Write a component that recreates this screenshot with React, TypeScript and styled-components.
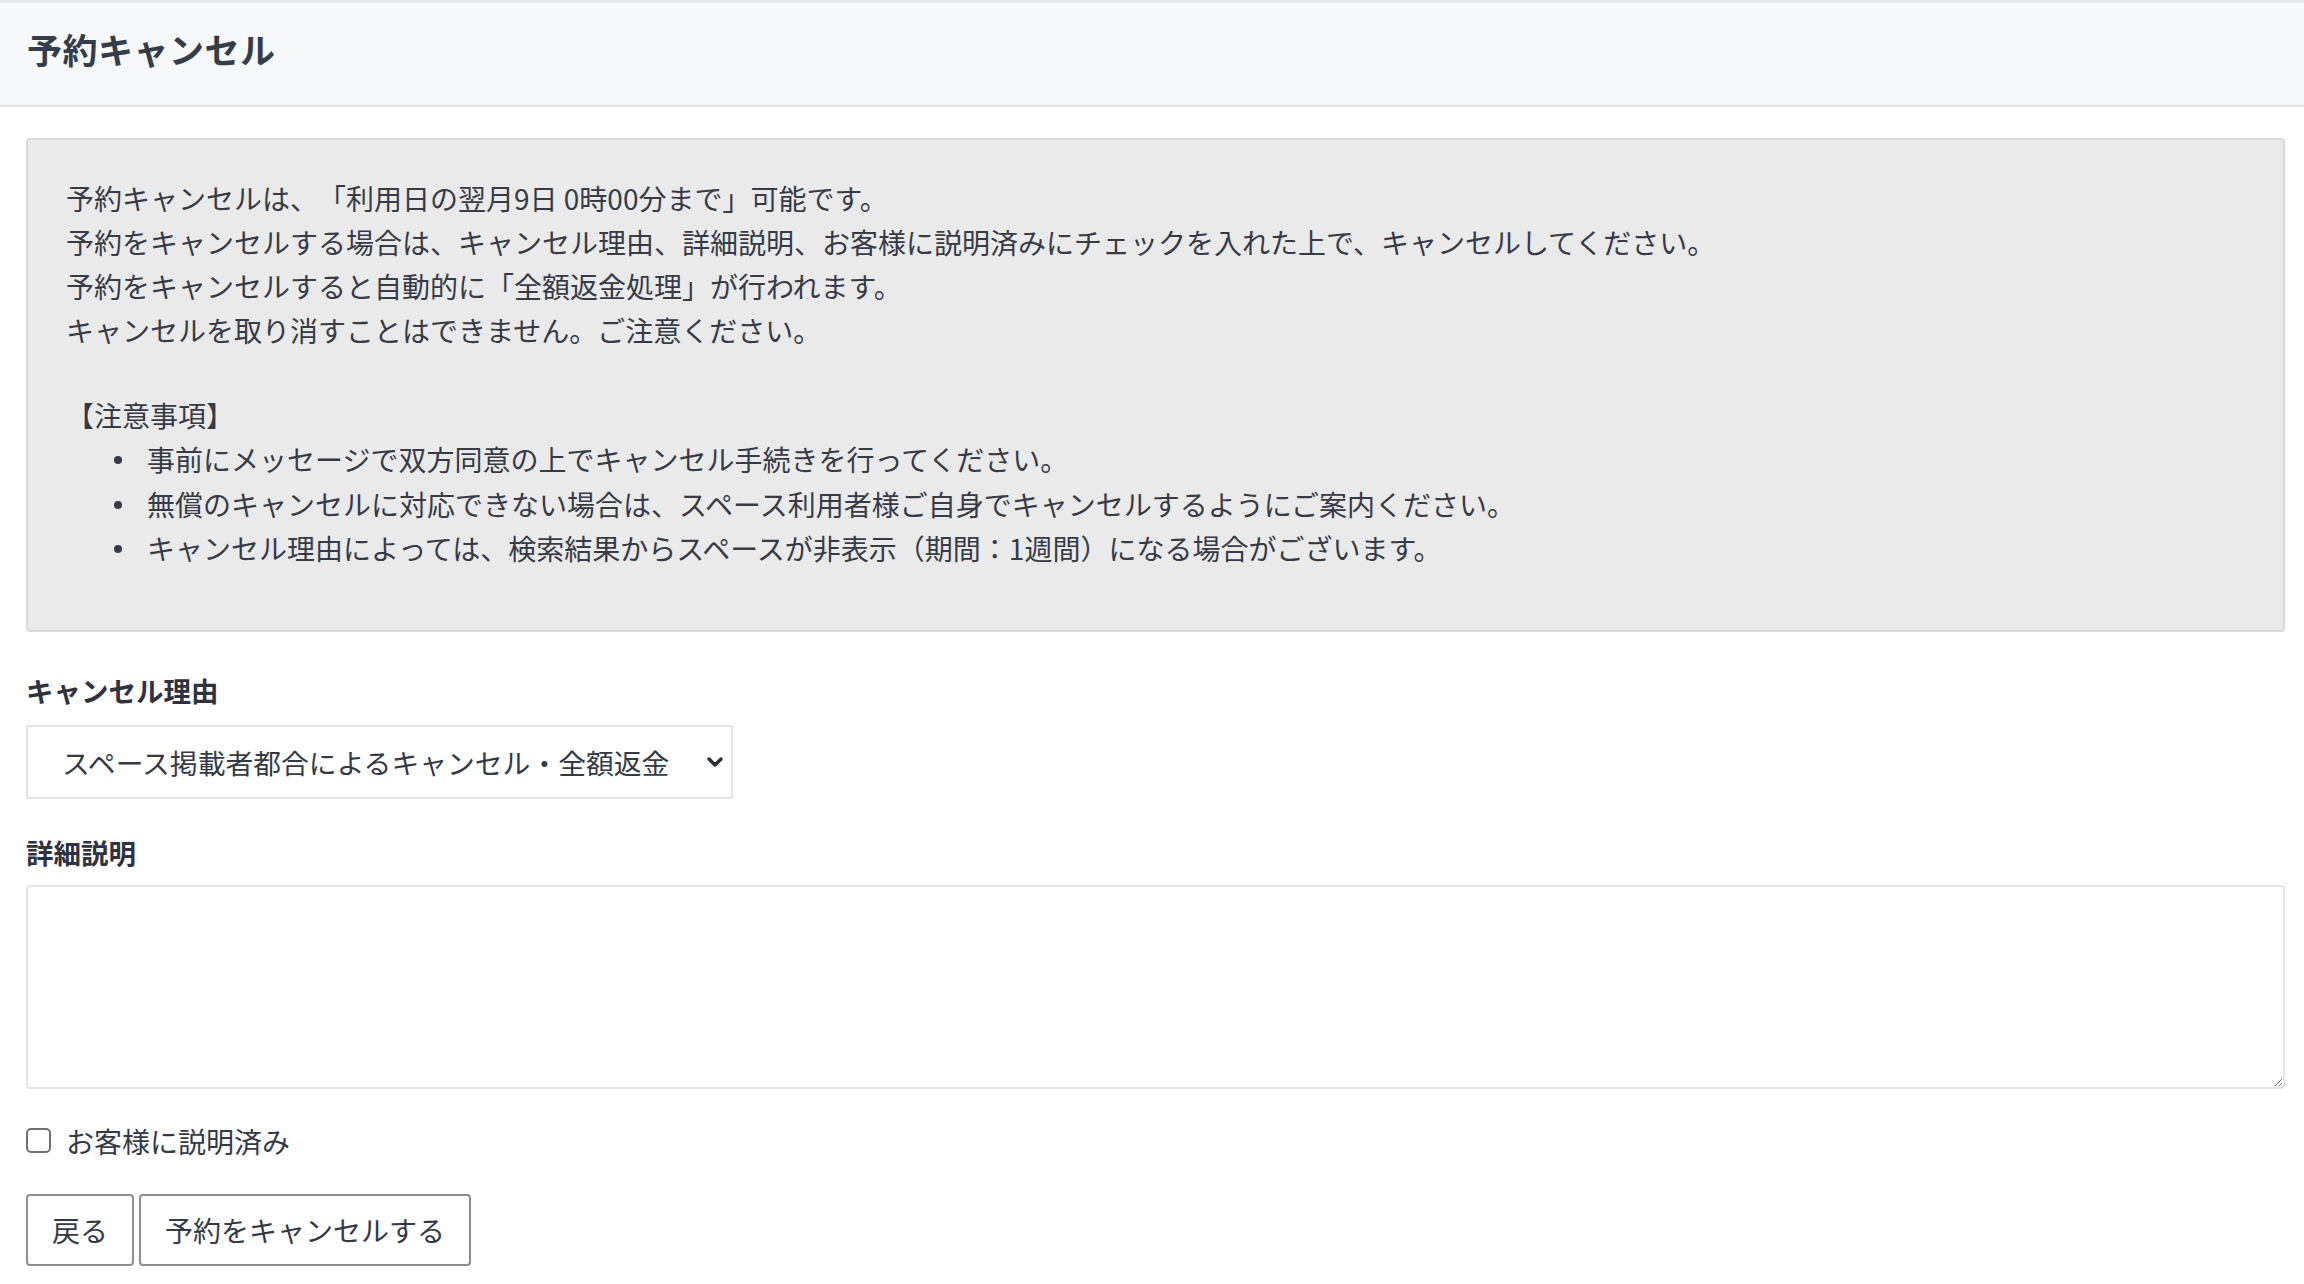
import React from "react";
import styled, { createGlobalStyle } from "styled-components";

const Global = createGlobalStyle`
  html, body { margin: 0; padding: 0; background: #ffffff; }
  body {
    font-family: "Noto Sans CJK JP", "Noto Sans", sans-serif;
    color: #333a45;
    font-size: 28px;
    text-spacing-trim: space-all;
  }
  * { box-sizing: border-box; }
`;

const Page = styled.div`
  display: flex;
  flex-direction: column;
  min-height: 1284px;
`;

const Header = styled.header`
  height: 107px;
  background: #f7f8fa;
  border-top: 3px solid #e6e7e9;
  border-bottom: 2px solid #e3e3e3;
  display: flex;
  align-items: center;
  padding: 0 27px 11px;
`;

const Title = styled.h1`
  margin: 0;
  font-size: 35px;
  font-weight: 700;
  color: #343e4a;
  letter-spacing: 0.5px;
`;

const Main = styled.main`
  padding: 31px 19px 0 26px;
  display: flex;
  flex-direction: column;
`;

const InfoBox = styled.section`
  background: #eaeaea;
  border: 2px solid #d9d9d9;
  border-radius: 4px;
  padding: 36px 38px 59px 38px;
  line-height: 44px;
  font-size: 28px;
  color: #363b47;
`;

const Para = styled.p`
  margin: 0;
`;

const Spacer = styled.div`
  height: 41px;
`;

const Notes = styled.ul`
  margin: 0;
  padding-left: 81px;
  list-style: none;
  line-height: 44.5px;
`;

const Note = styled.li`
  position: relative;
  &::before {
    content: "";
    position: absolute;
    left: -33px;
    top: 19px;
    width: 8px;
    height: 8px;
    border-radius: 50%;
    background: #363b47;
  }
`;

const Label = styled.label<{ $top: number }>`
  display: block;
  font-weight: 700;
  font-size: 27.5px;
  line-height: 44px;
  color: #2f3341;
  margin-top: ${(p) => p.$top}px;
`;

const SelectWrap = styled.div`
  position: relative;
  width: 707px;
  margin-top: 13px;
`;

const Select = styled.select`
  appearance: none;
  -webkit-appearance: none;
  width: 100%;
  height: 74px;
  border: 2px solid #e4e4e4;
  border-radius: 2px;
  background: #ffffff;
  padding: 0 60px 0 34px;
  font-family: "Noto Sans CJK JP", "Noto Sans", sans-serif;
  font-size: 27.8px;
  color: #333a45;
  outline: none;
`;

const Chevron = styled.svg`
  position: absolute;
  right: 10px;
  top: 50%;
  transform: translateY(-50%);
  width: 16px;
  height: 12px;
  pointer-events: none;
`;

const TextArea = styled.textarea`
  display: block;
  width: 100%;
  height: 204px;
  margin-top: 11px;
  border: 2px solid #e4e4e4;
  border-radius: 4px;
  background: #ffffff;
  font-family: "Noto Sans CJK JP", "Noto Sans", sans-serif;
  font-size: 28px;
  outline: none;
  resize: vertical;
`;

const CheckRow = styled.label`
  display: flex;
  align-items: center;
  gap: 15px;
  margin-top: 30px;
  line-height: 44px;
  font-size: 28px;
  color: #333a45;
`;

const Check = styled.input`
  appearance: none;
  -webkit-appearance: none;
  width: 25px;
  height: 25px;
  margin: 0;
  border: 2px solid #707070;
  border-radius: 5px;
  background: #ffffff;
`;

const Actions = styled.div`
  display: flex;
  gap: 5px;
  margin-top: 31px;
`;

const Button = styled.button`
  height: 72px;
  padding: 0 24px;
  border: 2px solid #8e8e8e;
  border-radius: 4px;
  background: #ffffff;
  font-family: "Noto Sans CJK JP", "Noto Sans", sans-serif;
  font-size: 28px;
  color: #333a45;
  cursor: pointer;
`;

export default function App() {
  return (
    <Page>
      <Global />
      <Header>
        <Title>予約キャンセル</Title>
      </Header>
      <Main>
        <InfoBox>
          <Para>
            予約キャンセルは、「利用日の翌月9日 0時00分まで」可能です。
            <br />
            予約をキャンセルする場合は、キャンセル理由、詳細説明、お客様に説明済みにチェックを入れた上で、キャンセルしてください。
            <br />
            予約をキャンセルすると自動的に「全額返金処理」が行われます。
            <br />
            キャンセルを取り消すことはできません。ご注意ください。
          </Para>
          <Spacer />
          <Para>【注意事項】</Para>
          <Notes>
            <Note>事前にメッセージで双方同意の上でキャンセル手続きを行ってください。</Note>
            <Note>無償のキャンセルに対応できない場合は、スペース利用者様ご自身でキャンセルするようにご案内ください。</Note>
            <Note>キャンセル理由によっては、検索結果からスペースが非表示（期間：1週間）になる場合がございます。</Note>
          </Notes>
        </InfoBox>

        <Label $top={36} htmlFor="reason">キャンセル理由</Label>
        <SelectWrap>
          <Select id="reason" defaultValue="owner">
            <option value="owner">スペース掲載者都合によるキャンセル・全額返金</option>
          </Select>
          <Chevron viewBox="0 0 16 12">
            <path d="M2 3 L8 9 L14 3" fill="none" stroke="#2b2f3a" strokeWidth="3.4" strokeLinecap="round" strokeLinejoin="round" />
          </Chevron>
        </SelectWrap>

        <Label $top={31} htmlFor="detail">詳細説明</Label>
        <TextArea id="detail" />

        <CheckRow>
          <Check type="checkbox" />
          お客様に説明済み
        </CheckRow>

        <Actions>
          <Button type="button">戻る</Button>
          <Button type="button">予約をキャンセルする</Button>
        </Actions>
      </Main>
    </Page>
  );
}
